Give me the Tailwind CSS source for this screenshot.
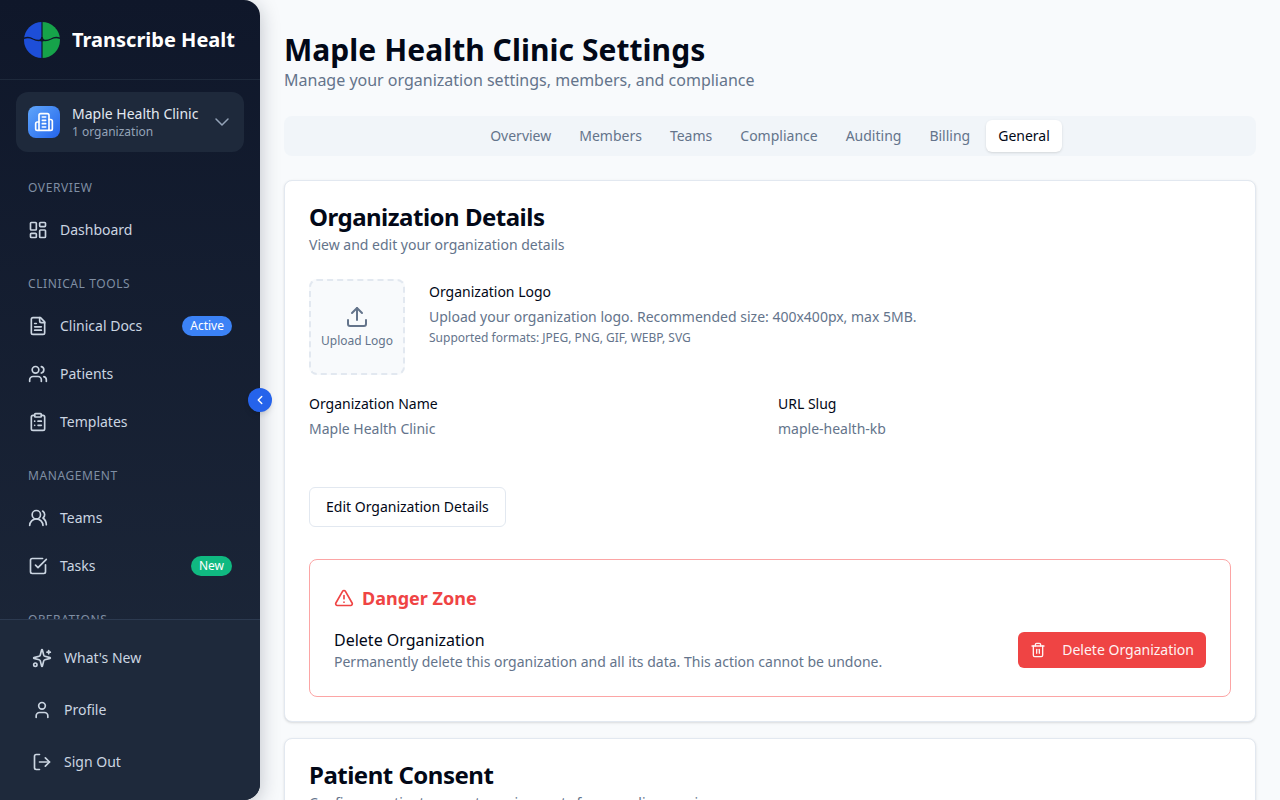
<!DOCTYPE html>
<html lang="en">
<head>
  <meta charset="UTF-8" />
  <meta name="viewport" content="width=device-width, initial-scale=1.0" />
  <title>Maple Health Clinic Settings</title>
  <script src="https://cdn.jsdelivr.net/npm/@tailwindcss/browser@4"></script>
</head>
<body class="bg-[#f8fafc] font-['Noto_Sans',sans-serif] text-[#020817] overflow-hidden">
  <div class="flex h-[800px] w-[1280px] overflow-hidden">

    <!-- Sidebar -->
    <aside class="relative z-10 flex h-full w-[260px] shrink-0 flex-col rounded-r-2xl bg-gradient-to-b from-[#0f172a] to-[#1e293b] shadow-[0_4px_20px_rgba(15,23,42,0.25)]">
      <div class="flex h-[80px] shrink-0 items-center gap-3 border-b border-[#1e293b] pl-6 pr-6">
        <svg class="h-9 w-9 shrink-0" viewBox="0 0 36 36">
          <path d="M18 0a18 18 0 0 0 0 36z" fill="#1d4ed8"/>
          <path d="M18 0a18 18 0 0 1 0 36z" fill="#16a34a"/>
          <path d="M0 16.300C3 15 6 15.300 9 17c3 1.600 6 2 9 .8 3 1.200 6 .8 9-.8 3-1.700 6-2 9-.7" fill="none" stroke="#0f172a" stroke-width="1.300"/>
          <path d="M14.500 18.500 Q17 17.800 17.300 15 H18.700 Q19 17.800 21.500 18.500 Q18 20.300 14.500 18.500z" fill="#0f172a"/>
          <path d="M18 0v36" stroke="#0f172a" stroke-width="1.200"/>
        </svg>
        <span class="min-w-0 overflow-hidden whitespace-nowrap text-[20px] font-bold leading-7 text-white">Transcribe Health</span>
      </div>

      <div class="min-h-0 flex-1 overflow-hidden">
        <div class="mx-4 mt-3 flex h-[60px] items-center rounded-xl bg-[#1e293b] pl-3 pr-[10px]">
          <div class="flex h-8 w-8 shrink-0 items-center justify-center rounded-lg bg-gradient-to-br from-[#60a5fa] to-[#2563eb]">
            <svg class="h-5 w-5 text-white" viewBox="0 0 24 24" fill="none" stroke="currentColor" stroke-width="2" stroke-linecap="round" stroke-linejoin="round"><path d="M6 22V4a2 2 0 0 1 2-2h8a2 2 0 0 1 2 2v18Z"/><path d="M6 12H4a2 2 0 0 0-2 2v6a2 2 0 0 0 2 2h2"/><path d="M18 9h2a2 2 0 0 1 2 2v9a2 2 0 0 1-2 2h-2"/><path d="M10 6h4"/><path d="M10 10h4"/><path d="M10 14h4"/><path d="M10 18h4"/></svg>
          </div>
          <div class="ml-3 min-w-0 flex-1">
            <div class="whitespace-nowrap text-sm leading-[18px] text-[#e2e8f0]">Maple Health Clinic</div>
            <div class="mt-[1px] whitespace-nowrap text-xs leading-4 text-[#94a3b8]">1 organization</div>
          </div>
          <svg class="h-6 w-6 shrink-0 text-[#94a3b8]" viewBox="0 0 24 24" fill="none" stroke="currentColor" stroke-width="1.500" stroke-linecap="round" stroke-linejoin="round"><path d="m6 9 6 6 6-6"/></svg>
        </div>

        <div class="mt-[28px] pl-7 text-xs leading-4 tracking-wider text-[#7f8ea3]">OVERVIEW</div>
        <nav class="mt-[10px]">
          <a class="flex h-12 items-center gap-3 pl-7 pr-7 text-sm text-[#cbd5e1]">
            <svg class="h-5 w-5 shrink-0" viewBox="0 0 24 24" fill="none" stroke="currentColor" stroke-width="2" stroke-linecap="round" stroke-linejoin="round"><rect width="7" height="9" x="3" y="3" rx="1"/><rect width="7" height="5" x="14" y="3" rx="1"/><rect width="7" height="9" x="14" y="12" rx="1"/><rect width="7" height="5" x="3" y="16" rx="1"/></svg>
            Dashboard
          </a>
        </nav>

        <div class="mt-[22px] pl-7 text-xs leading-4 tracking-wider text-[#7f8ea3]">CLINICAL TOOLS</div>
        <nav class="mt-[10px]">
          <a class="flex h-12 items-center gap-3 pl-7 pr-7 text-sm text-[#cbd5e1]">
            <svg class="h-5 w-5 shrink-0" viewBox="0 0 24 24" fill="none" stroke="currentColor" stroke-width="2" stroke-linecap="round" stroke-linejoin="round"><path d="M15 2H6a2 2 0 0 0-2 2v16a2 2 0 0 0 2 2h12a2 2 0 0 0 2-2V7Z"/><path d="M14 2v4a2 2 0 0 0 2 2h4"/><path d="M10 9H8"/><path d="M16 13H8"/><path d="M16 17H8"/></svg>
            Clinical Docs
            <span class="ml-auto rounded-full bg-[#3b82f6] px-2 text-xs leading-5 text-white">Active</span>
          </a>
          <a class="flex h-12 items-center gap-3 pl-7 pr-7 text-sm text-[#cbd5e1]">
            <svg class="h-5 w-5 shrink-0" viewBox="0 0 24 24" fill="none" stroke="currentColor" stroke-width="2" stroke-linecap="round" stroke-linejoin="round"><path d="M16 21v-2a4 4 0 0 0-4-4H6a4 4 0 0 0-4 4v2"/><circle cx="9" cy="7" r="4"/><path d="M22 21v-2a4 4 0 0 0-3-3.870"/><path d="M16 3.130a4 4 0 0 1 0 7.750"/></svg>
            Patients
          </a>
          <a class="flex h-12 items-center gap-3 pl-7 pr-7 text-sm text-[#cbd5e1]">
            <svg class="h-5 w-5 shrink-0" viewBox="0 0 24 24" fill="none" stroke="currentColor" stroke-width="2" stroke-linecap="round" stroke-linejoin="round"><rect width="8" height="4" x="8" y="2" rx="1" ry="1"/><path d="M16 4h2a2 2 0 0 1 2 2v14a2 2 0 0 1-2 2H6a2 2 0 0 1-2-2V6a2 2 0 0 1 2-2h2"/><path d="M12 11h4"/><path d="M12 16h4"/><path d="M8 11h.010"/><path d="M8 16h.010"/></svg>
            Templates
          </a>
        </nav>

        <div class="mt-[22px] pl-7 text-xs leading-4 tracking-wider text-[#7f8ea3]">MANAGEMENT</div>
        <nav class="mt-[10px]">
          <a class="flex h-12 items-center gap-3 pl-7 pr-7 text-sm text-[#cbd5e1]">
            <svg class="h-5 w-5 shrink-0" viewBox="0 0 24 24" fill="none" stroke="currentColor" stroke-width="2" stroke-linecap="round" stroke-linejoin="round"><path d="M18 21a8 8 0 0 0-16 0"/><circle cx="10" cy="8" r="5"/><path d="M22 20c0-3.370-2-6.500-4-8a5 5 0 0 0-.450-8.300"/></svg>
            Teams
          </a>
          <a class="flex h-12 items-center gap-3 pl-7 pr-7 text-sm text-[#cbd5e1]">
            <svg class="h-5 w-5 shrink-0" viewBox="0 0 24 24" fill="none" stroke="currentColor" stroke-width="2" stroke-linecap="round" stroke-linejoin="round"><path d="M21 10.500V19a2 2 0 0 1-2 2H5a2 2 0 0 1-2-2V5a2 2 0 0 1 2-2h12.500"/><path d="m9 11 3 3L22 4"/></svg>
            Tasks
            <span class="ml-auto rounded-full bg-[#10b981] px-2 text-xs leading-5 text-white">New</span>
          </a>
        </nav>

        <div class="mt-[22px] pl-7 text-xs leading-4 tracking-wider text-[#7f8ea3]">OPERATIONS</div>
      </div>

      <div class="shrink-0 rounded-br-2xl border-t border-[#2c3a50] bg-[#1e293b] px-4 pt-3 pb-[12px]">
        <a class="flex h-[52px] items-center gap-3 pl-4 text-sm text-[#cbd5e1]">
          <svg class="h-5 w-5 shrink-0" viewBox="0 0 24 24" fill="none" stroke="currentColor" stroke-width="2" stroke-linecap="round" stroke-linejoin="round"><path d="M9.937 15.500A2 2 0 0 0 8.500 14.063l-6.135-1.582a.500.500 0 0 1 0-.962L8.500 9.936A2 2 0 0 0 9.937 8.500l1.582-6.135a.500.500 0 0 1 .963 0L14.063 8.500A2 2 0 0 0 15.500 9.937l6.135 1.581a.500.500 0 0 1 0 .964L15.500 14.063a2 2 0 0 0-1.437 1.437l-1.582 6.135a.500.500 0 0 1-.963 0z"/><path d="M20 3v4"/><path d="M22 5h-4"/><circle cx="4" cy="20" r="2"/></svg>
          What's New
        </a>
        <a class="flex h-[52px] items-center gap-3 pl-4 text-sm text-[#cbd5e1]">
          <svg class="h-5 w-5 shrink-0" viewBox="0 0 24 24" fill="none" stroke="currentColor" stroke-width="2" stroke-linecap="round" stroke-linejoin="round"><path d="M19 21v-2a4 4 0 0 0-4-4H9a4 4 0 0 0-4 4v2"/><circle cx="12" cy="7" r="4"/></svg>
          Profile
        </a>
        <a class="flex h-[52px] items-center gap-3 pl-4 text-sm text-[#cbd5e1]">
          <svg class="h-5 w-5 shrink-0" viewBox="0 0 24 24" fill="none" stroke="currentColor" stroke-width="2" stroke-linecap="round" stroke-linejoin="round"><path d="M9 21H5a2 2 0 0 1-2-2V5a2 2 0 0 1 2-2h4"/><polyline points="16 17 21 12 16 7"/><line x1="21" x2="9" y1="12" y2="12"/></svg>
          Sign Out
        </a>
      </div>

      <button class="absolute top-[388px] -right-3 flex h-6 w-6 items-center justify-center rounded-full bg-[#2563eb] text-white shadow-md">
        <svg class="h-[14px] w-[14px]" viewBox="0 0 24 24" fill="none" stroke="currentColor" stroke-width="2.500" stroke-linecap="round" stroke-linejoin="round"><path d="m15 18-6-6 6-6"/></svg>
      </button>
    </aside>

    <!-- Main -->
    <main class="min-w-0 flex-1 overflow-hidden px-6 pt-[29px]">
      <h1 class="text-3xl leading-[42px] font-bold tracking-[0.05px] text-[#020817]">Maple Health Clinic Settings</h1>
      <p class="text-base leading-6 text-[#64748b] -mt-[3px]">Manage your organization settings, members, and compliance</p>

      <div class="mt-6 flex h-10 items-center justify-center gap-1 rounded-lg bg-[#f1f5f9] p-1">
        <span class="px-3 py-1.5 text-sm leading-5 text-[#64748b]">Overview</span>
        <span class="px-3 py-1.5 text-sm leading-5 text-[#64748b]">Members</span>
        <span class="px-3 py-1.5 text-sm leading-5 text-[#64748b]">Teams</span>
        <span class="px-3 py-1.5 text-sm leading-5 text-[#64748b]">Compliance</span>
        <span class="px-3 py-1.5 text-sm leading-5 text-[#64748b]">Auditing</span>
        <span class="px-3 py-1.5 text-sm leading-5 text-[#64748b]">Billing</span>
        <span class="rounded-md bg-white px-3 py-1.5 text-sm leading-5 text-[#020817] shadow-sm">General</span>
      </div>

      <section class="mt-6 h-[542px] rounded-lg border border-[#e2e8f0] bg-white px-6 pt-6 shadow-sm">
        <h2 class="text-2xl leading-6 font-bold tracking-[-0.5px] text-[#020817]">Organization Details</h2>
        <p class="mt-[6px] text-sm leading-5 text-[#64748b]">View and edit your organization details</p>

        <div class="mt-6 flex gap-6">
          <div class="flex h-24 w-24 shrink-0 flex-col items-center justify-center rounded-lg border-2 border-dashed border-[#e2e8f0] bg-[#f8fafc]">
            <svg class="h-6 w-6 text-[#64748b]" viewBox="0 0 24 24" fill="none" stroke="currentColor" stroke-width="2" stroke-linecap="round" stroke-linejoin="round"><path d="M21 15v4a2 2 0 0 1-2 2H5a2 2 0 0 1-2-2v-4"/><polyline points="17 8 12 3 7 8"/><line x1="12" x2="12" y1="3" y2="15"/></svg>
            <span class="mt-1 text-xs leading-4 text-[#64748b]">Upload Logo</span>
          </div>
          <div class="pt-[1px]">
            <div class="text-sm leading-6 text-[#020817]">Organization Logo</div>
            <p class="mt-[3px] text-sm leading-5 text-[#64748b]">Upload your organization logo. Recommended size: 400x400px, max 5MB.</p>
            <p class="mt-[3px] text-xs leading-4 text-[#64748b]">Supported formats: JPEG, PNG, GIF, WEBP, SVG</p>
          </div>
        </div>

        <div class="mt-[17px] grid grid-cols-2 gap-4">
          <div>
            <div class="text-sm leading-6 text-[#020817]">Organization Name</div>
            <div class="mt-[3px] text-sm leading-5 text-[#64748b]">Maple Health Clinic</div>
          </div>
          <div>
            <div class="text-sm leading-6 text-[#020817]">URL Slug</div>
            <div class="mt-[3px] text-sm leading-5 text-[#64748b]">maple-health-kb</div>
          </div>
        </div>

        <button class="mt-12 h-10 rounded-md border border-[#e2e8f0] bg-white px-4 text-sm text-[#020817]">Edit Organization Details</button>

        <div class="mt-8 h-[138px] rounded-lg border border-[#fca5a5] px-6 pt-6">
          <div class="flex items-center gap-2">
            <svg class="h-5 w-5 text-[#ef4444]" viewBox="0 0 24 24" fill="none" stroke="currentColor" stroke-width="2" stroke-linecap="round" stroke-linejoin="round"><path d="m21.730 18-8-14a2 2 0 0 0-3.480 0l-8 14A2 2 0 0 0 4 21h16a2 2 0 0 0 1.730-3"/><path d="M12 9v4"/><path d="M12 17h.010"/></svg>
            <span class="text-lg leading-7 font-bold text-[#ef4444]">Danger Zone</span>
          </div>
          <div class="mt-[16px] flex items-center justify-between">
            <div>
              <div class="text-base leading-6 text-[#020817]">Delete Organization</div>
              <div class="text-sm leading-5 text-[#64748b]">Permanently delete this organization and all its data. This action cannot be undone.</div>
            </div>
            <button class="flex h-9 items-center gap-[16px] rounded-md bg-[#ef4444] px-3 text-sm text-[#fef2f2]">
              <svg class="h-4 w-4" viewBox="0 0 24 24" fill="none" stroke="currentColor" stroke-width="2" stroke-linecap="round" stroke-linejoin="round"><path d="M3 6h18"/><path d="M19 6v14c0 1-1 2-2 2H7c-1 0-2-1-2-2V6"/><path d="M8 6V4c0-1 1-2 2-2h4c1 0 2 1 2 2v2"/><line x1="10" x2="10" y1="11" y2="17"/><line x1="14" x2="14" y1="11" y2="17"/></svg>
              Delete Organization
            </button>
          </div>
        </div>
      </section>

      <section class="mt-4 rounded-lg border border-[#e2e8f0] bg-white px-6 pt-6 pb-6 shadow-sm">
        <h2 class="text-2xl leading-6 font-bold tracking-[-0.5px] text-[#020817]">Patient Consent</h2>
        <p class="mt-[6px] text-sm leading-5 text-[#64748b]">Configure patient consent requirements for recording sessions</p>
      </section>
    </main>
  </div>
</body>
</html>
